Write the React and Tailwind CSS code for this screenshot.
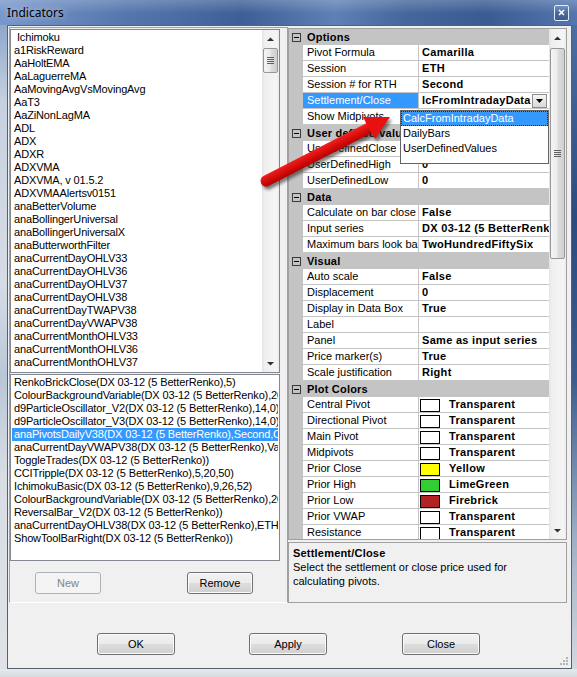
import React from "react";

const topItems = [
  " Ichimoku",
  "a1RiskReward",
  "AaHoltEMA",
  "AaLaguerreMA",
  "AaMovingAvgVsMovingAvg",
  "AaT3",
  "AaZiNonLagMA",
  "ADL",
  "ADX",
  "ADXR",
  "ADXVMA",
  "ADXVMA, v 01.5.2",
  "ADXVMAAlertsv0151",
  "anaBetterVolume",
  "anaBollingerUniversal",
  "anaBollingerUniversalX",
  "anaButterworthFilter",
  "anaCurrentDayOHLV33",
  "anaCurrentDayOHLV36",
  "anaCurrentDayOHLV37",
  "anaCurrentDayOHLV38",
  "anaCurrentDayTWAPV38",
  "anaCurrentDayVWAPV38",
  "anaCurrentMonthOHLV33",
  "anaCurrentMonthOHLV36",
  "anaCurrentMonthOHLV37",
];

const bottomItems = [
  "RenkoBrickClose(DX 03-12 (5 BetterRenko),5)",
  "ColourBackgroundVariable(DX 03-12 (5 BetterRenko),20)",
  "d9ParticleOscillator_V2(DX 03-12 (5 BetterRenko),14,0)",
  "d9ParticleOscillator_V3(DX 03-12 (5 BetterRenko),14,0)",
  "anaPivotsDailyV38(DX 03-12 (5 BetterRenko),Second,CalcFromIntradayData)",
  "anaCurrentDayVWAPV38(DX 03-12 (5 BetterRenko),Value)",
  "ToggleTrades(DX 03-12 (5 BetterRenko))",
  "CCITripple(DX 03-12 (5 BetterRenko),5,20,50)",
  "IchimokuBasic(DX 03-12 (5 BetterRenko),9,26,52)",
  "ColourBackgroundVariable(DX 03-12 (5 BetterRenko),20)",
  "ReversalBar_V2(DX 03-12 (5 BetterRenko))",
  "anaCurrentDayOHLV38(DX 03-12 (5 BetterRenko),ETH)",
  "ShowToolBarRight(DX 03-12 (5 BetterRenko))",
];

const gridRows = [
  { cat: "Options" },
  { n: "Pivot Formula", v: "Camarilla" },
  { n: "Session", v: "ETH" },
  { n: "Session # for RTH", v: "Second" },
  { n: "Settlement/Close", v: "lcFromIntradayData", sel: true },
  { n: "Show Midpivots", v: "True" },
  { cat: "User defined values" },
  { n: "UserDefinedClose", v: "0" },
  { n: "UserDefinedHigh", v: "0" },
  { n: "UserDefinedLow", v: "0" },
  { cat: "Data" },
  { n: "Calculate on bar close", v: "False" },
  { n: "Input series", v: "DX 03-12 (5 BetterRenko)" },
  { n: "Maximum bars look back", v: "TwoHundredFiftySix" },
  { cat: "Visual" },
  { n: "Auto scale", v: "False" },
  { n: "Displacement", v: "0" },
  { n: "Display in Data Box", v: "True" },
  { n: "Label", v: "" },
  { n: "Panel", v: "Same as input series" },
  { n: "Price marker(s)", v: "True" },
  { n: "Scale justification", v: "Right" },
  { cat: "Plot Colors" },
  { n: "Central Pivot", v: "Transparent", c: "bg-white" },
  { n: "Directional Pivot", v: "Transparent", c: "bg-white" },
  { n: "Main Pivot", v: "Transparent", c: "bg-white" },
  { n: "Midpivots", v: "Transparent", c: "bg-white" },
  { n: "Prior Close", v: "Yellow", c: "bg-[#ffff00]" },
  { n: "Prior High", v: "LimeGreen", c: "bg-[#32cd32]" },
  { n: "Prior Low", v: "Firebrick", c: "bg-[#b22222]" },
  { n: "Prior VWAP", v: "Transparent", c: "bg-white" },
  { n: "Resistance", v: "Transparent", c: "bg-white" },
];

function UpGlyph() {
  return (
    <svg width="7" height="4" viewBox="0 0 7 4">
      <path d="M0 4 L3.5 0.5 L7 4 Z" fill="#303030" />
    </svg>
  );
}

function DownGlyph() {
  return (
    <svg width="7" height="4" viewBox="0 0 7 4">
      <path d="M0 0 L3.5 3.5 L7 0 Z" fill="#303030" />
    </svg>
  );
}

function Grip() {
  return (
    <div className="flex flex-col gap-[1px]">
      <div className="h-[1px] w-[7px] bg-[#606060]" />
      <div className="h-[1px] w-[7px] bg-[#606060]" />
      <div className="h-[1px] w-[7px] bg-[#606060]" />
      <div className="h-[1px] w-[7px] bg-[#606060]" />
    </div>
  );
}

// Vertical Win7-style scrollbar for the indicator list
function ListScrollBar() {
  return (
    <div className="flex h-full w-[17px] shrink-0 flex-col bg-[linear-gradient(90deg,#e3e3e3_0%,#efefef_15%,#f5f5f5_85%,#ebebeb_100%)]">
      <div className="flex h-[17px] shrink-0 items-center justify-center">
        <UpGlyph />
      </div>
      <div className="mx-[1px] mt-[1px] flex h-[25px] shrink-0 items-center justify-center rounded-[2px] border border-[#979797] bg-[linear-gradient(90deg,#f4f4f4_0%,#ececec_45%,#dcdcdc_55%,#cfcfcf_100%)]">
        <Grip />
      </div>
      <div className="flex-1" />
      <div className="flex h-[17px] shrink-0 items-center justify-center">
        <DownGlyph />
      </div>
    </div>
  );
}

// Vertical scrollbar for the property grid
function GridScrollBar() {
  return (
    <div className="flex h-full w-[17px] shrink-0 flex-col bg-[linear-gradient(90deg,#e3e3e3_0%,#efefef_15%,#f5f5f5_85%,#ebebeb_100%)]">
      <div className="flex h-[17px] shrink-0 items-center justify-center">
        <UpGlyph />
      </div>
      <div className="mx-[1px] mt-[2px] flex h-[211px] shrink-0 items-center justify-center rounded-[2px] border border-[#979797] bg-[linear-gradient(90deg,#f4f4f4_0%,#ececec_45%,#dcdcdc_55%,#cfcfcf_100%)]">
        <Grip />
      </div>
      <div className="flex-1" />
      <div className="flex h-[17px] shrink-0 items-center justify-center">
        <DownGlyph />
      </div>
    </div>
  );
}

function WinButton({ label, disabled, className }) {
  return (
    <div
      className={
        disabled
          ? "flex h-[22px] shrink-0 items-center justify-center rounded-[3px] border border-[#adb2b5] bg-[#f4f4f4] text-[#838383] " + className
          : "flex h-[22px] shrink-0 items-center justify-center rounded-[3px] border border-[#707070] bg-[linear-gradient(180deg,#f2f2f2_0%,#ebebeb_48%,#dddddd_52%,#cfcfcf_100%)] text-black shadow-[inset_0_0_0_1px_#fbfbfb] " + className
      }
    >
      {label}
    </div>
  );
}

function CategoryRow({ label }) {
  return (
    <div className="flex h-[16px] shrink-0 items-center bg-[#c4c4c4]">
      <div className="ml-[3px] flex h-[9px] w-[9px] shrink-0 items-center justify-center border border-[#3a3a3a]">
        <div className="h-[1px] w-[5px] bg-black" />
      </div>
      <span className="ml-[6px] whitespace-nowrap font-bold tracking-[0.2px]">{label}</span>
    </div>
  );
}

function PropRow({ row }) {
  return (
    <div className="flex h-[16px] shrink-0 bg-[#c4c4c4]">
      <div className="w-[14px] shrink-0" />
      <div
        className={
          row.sel
            ? "h-[15px] w-[115px] shrink-0 overflow-hidden whitespace-nowrap bg-[#3399ff] pl-[4px] leading-[15px] text-white"
            : "h-[15px] w-[115px] shrink-0 overflow-hidden whitespace-nowrap bg-white pl-[4px] leading-[15px] text-black"
        }
      >
        {row.n}
      </div>
      <div className="ml-[1px] flex h-[15px] w-[130px] shrink-0 overflow-hidden whitespace-nowrap bg-white">
        {row.c ? (
          <>
            <div className={"ml-[1px] mt-[2px] h-[13px] w-[20px] shrink-0 border border-black " + row.c} />
            <span className="ml-[9px] font-bold leading-[15px] tracking-[0.3px]">{row.v}</span>
          </>
        ) : row.sel ? (
          <>
            <span className="flex-1 overflow-hidden pl-[3px] font-bold leading-[15px] tracking-[0.3px]">{row.v}</span>
            <div className="mr-[2px] mt-[1px] flex h-[14px] w-[15px] shrink-0 items-center justify-center border border-[#8c8c8c] bg-[linear-gradient(180deg,#f6f6f6_0%,#e6e6e6_50%,#d9d9d9_100%)]">
              <svg width="7" height="4" viewBox="0 0 7 4">
                <path d="M0 0 L3.5 4 L7 0 Z" fill="#000" />
              </svg>
            </div>
          </>
        ) : (
          <span className="pl-[3px] font-bold leading-[15px] tracking-[0.3px]">{row.v}</span>
        )}
      </div>
    </div>
  );
}

export default function App() {
  return (
    <div className="relative flex h-[677px] w-[577px] flex-col overflow-hidden bg-[#d7dde5] font-['Liberation_Sans',Arial,sans-serif] text-[11px] text-black">
      {/* caption bar */}
      <div className="flex h-[25px] shrink-0 items-center bg-[linear-gradient(180deg,rgba(255,255,255,0.2)_0%,rgba(255,255,255,0)_55%),linear-gradient(90deg,#7898cb_0%,#5576ad_22%,#3d5f97_42%,#5f80b5_58%,#46679d_70%,#3a5b92_84%,#5475ad_100%)]">
        <span className="pl-[7px] font-['Noto_Sans',sans-serif] text-[12px] leading-none text-black [text-shadow:0_0_6px_rgba(255,255,255,0.75)]">
          Indicators
        </span>
        <div className="ml-auto mr-[8px] flex h-[16px] w-[15px] items-center justify-center rounded-[2px] border border-[#e4ebf4] bg-[linear-gradient(180deg,#7391c2_0%,#4a6a9f_50%,#3c5b8f_100%)]">
          <svg width="7" height="7" viewBox="0 0 7 7">
            <path d="M1 1 L6 6 M6 1 L1 6" stroke="#ffffff" strokeWidth="1.6" />
          </svg>
        </div>
      </div>

      <div className="flex h-[644px] shrink-0">
        {/* left frame */}
        <div className="w-[7px] shrink-0 bg-[linear-gradient(180deg,#8fa7cc_0%,#c6d1e0_12%,#d6dce5_40%,#b9c6d8_55%,#d8dde4_70%,#dfe2e7_100%)]" />

        {/* client area */}
        <div className="flex w-[565px] shrink-0 flex-col border border-[#56616f] bg-[#f0f0f0]">
          <div className="flex h-[577px] shrink-0">
            {/* left panel: available and applied indicators */}
            <div className="ml-[1px] mt-[1px] flex h-[576px] w-[279px] shrink-0 flex-col border border-[#a0a0a0] border-b-white">
              <div className="mt-[1px] flex h-[344px] w-[270px] shrink-0 border border-[#828790] bg-white">
                <div className="flex-1 overflow-hidden pt-[1px] tracking-[-0.15px]">
                  {topItems.map((t, i) => (
                    <div key={i} className="mx-[1px] h-[13px] whitespace-pre pl-[2px] leading-[13px]">
                      {t}
                    </div>
                  ))}
                </div>
                <ListScrollBar />
              </div>

              <div className="mt-[1px] h-[187px] w-[270px] shrink-0 overflow-hidden border border-[#828790] bg-white pt-[1px] tracking-[-0.15px]">
                {bottomItems.map((t, i) => (
                  <div
                    key={i}
                    className={
                      i === 4
                        ? "mx-[1px] h-[13px] overflow-hidden whitespace-pre bg-[#3399ff] pl-[2px] leading-[13px] text-white"
                        : "mx-[1px] h-[13px] overflow-hidden whitespace-pre pl-[2px] leading-[13px]"
                    }
                  >
                    {t}
                  </div>
                ))}
              </div>

              <div className="mt-[11px] flex">
                <WinButton label="New" disabled className="ml-[25px] w-[66px]" />
                <WinButton label="Remove" className="ml-[86px] w-[66px]" />
              </div>
            </div>

            {/* right panel: property grid and help */}
            <div className="flex w-[279px] shrink-0 flex-col">
              <div className="relative mt-[2px] flex h-[512px] shrink-0 border border-[#a0a0a0] bg-[#c4c4c4]">
                <div className="flex w-[260px] shrink-0 flex-col overflow-hidden">
                  {gridRows.map((r, i) =>
                    r.cat ? <CategoryRow key={i} label={r.cat} /> : <PropRow key={i} row={r} />
                  )}
                </div>
                <GridScrollBar />

                {/* open drop-down of the Settlement/Close editor */}
                <div className="absolute left-[111px] top-[81px] z-10 h-[54px] w-[149px] border border-[#646464] bg-white">
                  <div className="h-[15px] whitespace-nowrap border border-dotted border-[#1d2a44] bg-[#3399ff] pl-[1px] leading-[13px] text-white">
                    CalcFromIntradayData
                  </div>
                  <div className="h-[15px] whitespace-nowrap pl-[2px] leading-[15px]">DailyBars</div>
                  <div className="h-[15px] whitespace-nowrap pl-[2px] leading-[15px]">UserDefinedValues</div>
                </div>
              </div>

              <div className="mt-[2px] h-[61px] shrink-0 border border-[#a0a0a0] bg-[#f0f0f0] pl-[4px] pt-[3px]">
                <div className="h-[14px] font-bold leading-[14px] tracking-[0.2px]">Settlement/Close</div>
                <div className="h-[14px] leading-[14px]">Select the settlement or close price used for</div>
                <div className="h-[14px] leading-[14px]">calculating pivots.</div>
              </div>
            </div>
          </div>

          {/* dialog buttons */}
          <div className="relative flex h-[65px] shrink-0 pt-[30px]">
            <WinButton label="OK" className="ml-[89px] w-[78px]" />
            <WinButton label="Apply" className="ml-[74px] w-[78px]" />
            <WinButton label="Close" className="ml-[75px] w-[78px]" />
            <svg className="absolute bottom-[2px] right-[2px]" width="10" height="10" viewBox="0 0 10 10">
              <rect x="7" y="1" width="2" height="2" fill="#b5b5b5" />
              <rect x="7" y="4" width="2" height="2" fill="#b5b5b5" />
              <rect x="4" y="4" width="2" height="2" fill="#b5b5b5" />
              <rect x="7" y="7" width="2" height="2" fill="#b5b5b5" />
              <rect x="4" y="7" width="2" height="2" fill="#b5b5b5" />
              <rect x="1" y="7" width="2" height="2" fill="#b5b5b5" />
            </svg>
          </div>
        </div>

        {/* right frame */}
        <div className="w-[5px] shrink-0 bg-[linear-gradient(180deg,#4d6ea4_0%,#2c4b7f_30%,#3c5c8e_55%,#9fb0c6_80%,#d3d9e0_100%)]" />
      </div>

      {/* bottom frame */}
      <div className="h-[8px] shrink-0 bg-[linear-gradient(180deg,#e6e9ed_0%,#d7dce2_100%)]" />

      {/* red callout arrow */}
      <svg className="pointer-events-none absolute left-0 top-0 z-20" width="577" height="677">
        <defs>
          <linearGradient id="arrowRed" gradientUnits="userSpaceOnUse" x1="314" y1="145" x2="321" y2="159">
            <stop offset="0" stopColor="#ff7070" />
            <stop offset="0.35" stopColor="#f01a1a" />
            <stop offset="1" stopColor="#b80000" />
          </linearGradient>
          <filter id="arrowShadow" x="-20%" y="-20%" width="140%" height="140%">
            <feGaussianBlur stdDeviation="1.6" />
          </filter>
        </defs>
        <g filter="url(#arrowShadow)" opacity="0.6" transform="translate(2 3)">
          <line x1="266" y1="181" x2="371" y2="127" stroke="#2a2a2a" strokeWidth="11" strokeLinecap="round" />
          <polygon points="390,117 375,139 363,117" fill="#2a2a2a" />
        </g>
        <line x1="266" y1="181" x2="371" y2="127" stroke="url(#arrowRed)" strokeWidth="11" strokeLinecap="round" />
        <polygon points="390,117 375,139 363,117" fill="#e81010" />
      </svg>
    </div>
  );
}
